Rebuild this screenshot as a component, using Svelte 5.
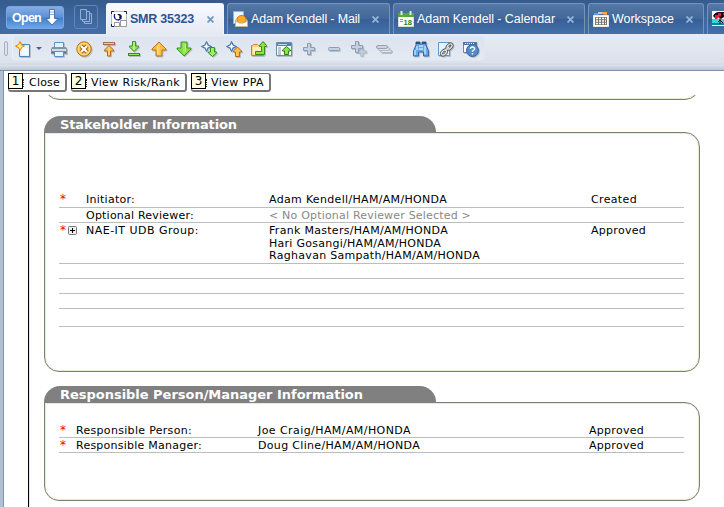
<script>
  const tabs = [
    { title: 'Adam Kendell - Mail', icon: 'mail', width: 163, text: 109 },
    { title: 'Adam Kendell - Calendar', icon: 'calendar', width: 192, text: 138 },
    { title: 'Workspace', icon: 'workspace', width: 116, text: 62 },
    { title: '', icon: 'picture', width: 30, text: 0 }
  ];
  const tools = ['print', 'stop', 'top', 'bottom', 'up', 'down', 'nextUnread', 'prevUnread', 'folder', 'restore', 'plus', 'minus', 'plusAll', 'minusAll', 'find', 'link', 'help'];
  const actions = [
    { key: 1, title: 'Close', width: 59, text: 31, tint: '#a02020' },
    { key: 2, title: 'View Risk/Rank', width: 116, text: 89, tint: '#222' },
    { key: 3, title: 'View PPA', width: 80, text: 53, tint: '#222' }
  ];
  const panels = [
    {
      title: 'Stakeholder Information', text: 177, kind: 'stake',
      rows: [
        { h: 16, req: true, label: 'Initiator:', lw: 49, values: [['Adam Kendell/HAM/AM/HONDA', 178]], status: 'Created', sw: 46 },
        { h: 15, label: 'Optional Reviewer:', lw: 108, values: [['< No Optional Reviewer Selected >', 202]], muted: true },
        { h: 41, req: true, expand: true, label: 'NAE-IT UDB Group:', lw: 113, values: [['Frank Masters/HAM/AM/HONDA', 179], ['Hari Gosangi/HAM/AM/HONDA', 172], ['Raghavan Sampath/HAM/AM/HONDA', 211]], status: 'Approved', sw: 55 },
        { h: 15 }, { h: 15 }, { h: 15 }, { h: 18 }
      ]
    },
    {
      title: 'Responsible Person/Manager Information', text: 303, kind: 'resp',
      rows: [
        { h: 15, req: true, label: 'Responsible Person:', lw: 116, values: [['Joe Craig/HAM/AM/HONDA', 153]], status: 'Approved', sw: 55 },
        { h: 15, req: true, label: 'Responsible Manager:', lw: 126, values: [['Doug Cline/HAM/AM/HONDA', 162]], status: 'Approved', sw: 55 }
      ]
    }
  ];

  // Spreads the letters of a label so that it takes the given width.
  function fit(node, width) {
    if (!width) return;
    const gap = (width - node.getBoundingClientRect().width) / node.textContent.length;
    node.style.letterSpacing = gap + 'px';
  }
</script>

{#snippet upArrow(fill, stroke)}
  <path d="M8 1 15 8v1h-4v6H5V9H1V8Z" {fill} {stroke} stroke-linejoin="round" />
  <path d="M8 3v11M6.5 5v8" stroke="#fff" stroke-opacity=".45" fill="none" />
{/snippet}

{#snippet unread()}
  <path d="M5.500 .5 7 4l3.500 1.500L7 7 5.500 10.500 4 7 .5 5.500 4 4Z" fill="#b4d6fa" stroke="#3468a8" />
  <path d="M5.500 3v5M3 5.500h5" stroke="#fff" />
{/snippet}

{#snippet plusShape()}
  <path d="M6.500 2.500h3v4h4v3h-4v4h-3v-4h-4v-3h4Z" fill="#c3d1e2" stroke="#8b9db5" />
{/snippet}

{#snippet icon(name)}
  <svg class="icon" viewBox="0 0 16 16" width="16" height="16">
    {#if name === 'new'}
      <path d="M5.500 3.500h9v12h-10V9" fill="#e3f1ff" stroke="#4a83bd" />
      <path d="M7 6h6v8H7z" fill="#fff" opacity=".6" />
      <path d="M5 .5 6.500 4 9.500 5 6.500 6.500 5 9.500 3.500 6.500.5 5l3-1.500Z" fill="#ffe58a" stroke="#e58a13" />
    {:else if name === 'print'}
      <path d="M3.500 6V1.500h9V6" fill="#e5f3ff" stroke="#5a90c8" />
      <path d="M1 6h14l1 2v5H0V8Z" fill="#8294a6" />
      <path d="M1 8h14v2H1z" fill="#cfdae4" />
      <path d="M1 11h14v1H1z" fill="#53687e" />
      <path d="M3.500 10.500h9v5h-9z" fill="#e5f3ff" stroke="#5a90c8" />
    {:else if name === 'stop'}
      <circle cx="8" cy="8" r="7.200" fill="#ffc34d" stroke="#b86f14" />
      <circle cx="8" cy="8" r="5.700" fill="none" stroke="#ffe08a" />
      <path d="m5 5 6 6m0-6-6 6" stroke="#9a5a16" stroke-width="4" />
      <path d="m5 5 6 6m0-6-6 6" stroke="#fff" stroke-width="2.200" />
    {:else if name === 'top'}
      <path d="M2 1h12v3H2z" fill="#a76b52" /><path d="M3 2h10v1H3z" fill="#ffce85" />
      <path d="m8 4.500 4.500 4.500v1H9.500v5h-3v-5h-3V9Z" fill="#ffbd45" stroke="#b66a25" />
      <path d="M8 6v8" stroke="#ffe39a" />
    {:else if name === 'bottom'}
      <path d="M6.500.5h3V5h3v1L8 10.500 3.500 6V5h3Z" fill="#93e34a" stroke="#3b962a" />
      <path d="M8 1v8" stroke="#d8ffa8" />
      <path d="M2 12h12v3H2z" fill="#328c28" /><path d="M3 13h10v1H3z" fill="#9ae85c" />
    {:else if name === 'up'}
      {@render upArrow('#ffbd3e', '#b8712a')}
    {:else if name === 'down'}
      <g transform="rotate(180 8 8)">{@render upArrow('#83df3c', '#3a9828')}</g>
    {:else if name === 'nextUnread'}
      {@render unread()}
      <path d="M9.500 6.500V11h-2v1l4 3.500 4-3.500v-1h-2V6.500Z" fill="#a4ec62" stroke="#318d25" />
    {:else if name === 'prevUnread'}
      {@render unread()}
      <path d="M9.500 15.500V11h-2v-1l4-4 4 4v1h-2v4.500Z" fill="#ffbf52" stroke="#bd641b" />
    {:else if name === 'folder'}
      <path d="M.5 4.500h1l1-1h4l1 1h5v10H.5Z" fill="#ffd784" stroke="#c8822f" />
      <path d="M2 6h9v7H2z" fill="#ffefb7" />
      <path d="M4.500 13.500v-3h6v-5h-2v-1l3.500-4 3.500 4v1h-2v8Z" fill="#93df36" stroke="#348c1e" />
    {:else if name === 'restore'}
      <path d="M.5 1.500h15v13H.5Z" fill="#fff" stroke="#7189a2" />
      <path d="M1 2h14v3H1z" fill="#4b85c5" /><path d="M2 3.500h9" stroke="#b8dcff" />
      <path d="M2 7h3M2 9h3M2 11h3M2 13h3" stroke="#81909e" />
      <path d="M8.500 13.500V10h-2V9l4-3.500 4 3.500v1h-2v3.500Z" fill="#8ce143" stroke="#26801f" />
    {:else if name === 'plus'}
      {@render plusShape()}
    {:else if name === 'minus'}
      <rect x="2.500" y="6.500" width="11" height="3" rx="1" fill="#c3d1e2" stroke="#8b9db5" />
    {:else if name === 'plusAll'}
      <g transform="translate(4.500 4.500) scale(.8)" opacity=".6">{@render plusShape()}</g>
      <g transform="translate(-2 -2)">{@render plusShape()}</g>
    {:else if name === 'minusAll'}
      <rect x="4.500" y="8.500" width="11" height="3" rx="1.500" fill="#e1e5ea" stroke="#b2b9c2" />
      <rect x="2.500" y="6.500" width="11" height="3" rx="1.500" fill="#e1e5ea" stroke="#b2b9c2" />
      <rect x=".5" y="4.500" width="11" height="3" rx="1.500" fill="#cbd5e1" stroke="#94a3b8" />
    {:else if name === 'find'}
      <path d="M3 1h4v3h2V1h4v3l2.500 6v5h-5v-4h-5v4h-5v-5L3 4Z" fill="#65a8ed" stroke="#35699f" />
      <path d="M3 1h4v2H3zm6 0h4v2H9z" fill="#28527f" />
      <path d="M2 9v5M4 5v4M12 5v8M6 5h4M6 8h4" stroke="#c7e7ff" stroke-width="1.300" />
    {:else if name === 'link'}
      <path d="M.5 1.500h11v13H.5Z" fill="#e4f3ff" stroke="#6594c8" />
      <g fill="none" stroke="#54595f" stroke-width="3"><ellipse cx="11.500" cy="5.500" rx="3" ry="1.800" transform="rotate(-45 11.500 5.500)" /><ellipse cx="6" cy="11.500" rx="3" ry="1.800" transform="rotate(-45 6 11.500)" /></g>
      <g fill="none" stroke="#e4e4df" stroke-width="1.300"><ellipse cx="11.500" cy="5.500" rx="3" ry="1.800" transform="rotate(-45 11.500 5.500)" /><ellipse cx="6" cy="11.500" rx="3" ry="1.800" transform="rotate(-45 6 11.500)" /><path d="m7 10 4-4" /></g>
    {:else if name === 'help'}
      <path d="M.5 1.500h13v10H.5Z" fill="#f7fbff" stroke="#71869c" />
      <path d="M0 1h14v3H0z" fill="#4779ad" /><path d="M2 2.500h9" stroke="#fff" stroke-dasharray="1 1" />
      <circle cx="9.500" cy="9.500" r="6" fill="#518bcd" stroke="#3a6197" />
      <path d="M7.500 8V7q2-2 4 0v1.500L9.500 10v1m0 1v1.500" fill="none" stroke="#fff" stroke-width="1.400" />
    {:else if name === 'notes'}
      <path d="M.5.5h15v15H.5Z" fill="#fff" stroke="#bbb" />
      <path d="M.5 3V.5H3M13 .5h2.500V3M.5 13v2.500H3" fill="none" stroke="#181878" />
      <path d="M3.500 3q-1 6 4 6l3-2" fill="none" stroke="#14146b" stroke-width="1.300" />
      <path d="M6 3h3l2 2-1 3-2-1 .500-2Z" fill="#12126c" />
      <path d="M9.500 9.500h6v6h-6Zm-6 2h5v4h-5Z" fill="#fff" stroke="#999" />
    {:else if name === 'mail'}
      <path d="M1.500.5h10v12h-10Z" fill="#f0f8ff" stroke="#8cb5e0" />
      <path d="m3.500 9 5.500-5 6 5v6.500H3.500Z" fill="#ffe5a7" stroke="#d2b57d" />
      <ellipse cx="9.500" cy="8.500" rx="4.500" ry="4" fill="#ffad28" stroke="#db7710" />
      <path d="m3.500 10 4 2h4l4-2v5.500h-12Z" fill="#fffdf2" stroke="#c0b49c" />
    {:else if name === 'calendar'}
      <path d="M.5 2.500h15v13H.5Z" fill="#fff" stroke="#d6ddd2" />
      <path d="M0 2h16v4H0z" fill="#56a83b" />
      <path d="M3.500 0v4m9-4v4" stroke="#dcefd5" stroke-width="2" />
      <path d="M2 8.500h3m-3 2h3" stroke="#8b959d" />
      <text x="5.500" y="13.500" font-size="7.500" font-weight="bold" fill="#277d23">18</text>
    {:else if name === 'workspace'}
      <path d="M1 4V2h4l1 2z" fill="#5f9de4" /><path d="M5 3V1h4l1 2z" fill="#9ed2ff" /><path d="M9 3V1h5v3z" fill="#f7a947" />
      <path d="M.5 4.500h15v11H.5Z" fill="#fff" stroke="#e8e8e4" />
      <path d="M2 6h12v8H2z" fill="#77756f" />
      <path d="M3 7.500h2m1 0h2m1 0h2m1 0h1M3 10h2m1 0h2m1 0h2m1 0h1M3 12.500h2m1 0h2m1 0h2m1 0h1" stroke="#fff" stroke-width="1.500" />
    {:else}
      <path d="M0 0h16v15H0z" fill="#fff" /><path d="M0 8h16v4H0z" fill="#35d5de" /><path d="M0 12h16v2H0z" fill="#008a94" />
      <path d="M1 5q2-4 6-4h7l2 3v4l-4-2-3 2-2-2-4 1Z" fill="#080808" />
      <path d="M3 4h3V2h3v4H7l-2 2H3Zm8-2h3v2h-3Z" fill="#ed1747" />
      <path d="M8 5v8m-2-2 2-2 3 3" stroke="#111" fill="none" />
    {/if}
  </svg>
{/snippet}

<div class="window">
  <header class="tabs">
    <button class="open"><span use:fit={29}>Open</span>
      <svg width="14" height="17" viewBox="0 0 14 17"><path d="M4.500.5h5v9h3.500L7 16 1 9.500h3.500Z" fill="#fff" stroke="#4773ad" /><path d="M5 3h4M5 5.500h4" stroke="#8caedb" /></svg>
    </button>
    <button class="thumbs" aria-label="Thumbnails"><svg width="14" height="16" viewBox="0 0 14 16"><g fill="#42689d" stroke="#91b0d9"><path d="M5.500 4.500h7v10h-7Z" /><path d="M3.500 2.500h7v10h-7Z" /><path d="M1.500.5h6v10h-6Z" /></g></svg></button>
    <div class="tab active">{@render icon('notes')}<span use:fit={64}>SMR 35323</span><svg class="x" viewBox="0 0 7 7"><path d="m.500.500 6 6m0-6-6 6" /></svg></div>
    {#each tabs as t}
      <div class="tab" style:width="{t.width}px">
        {@render icon(t.icon)}
        {#if t.title}<span use:fit={t.text}>{t.title}</span><svg class="x" viewBox="0 0 7 7"><path d="m.500.500 6 6m0-6-6 6" /></svg>{/if}
      </div>
    {/each}
  </header>

  <nav class="toolbar">
    <i class="grip"></i>
    <div class="tools">
      {@render icon('new')}
      <i class="caret"></i>
      {#each tools as tool}
        <span class="tool" class:split={tool === 'find'}>{@render icon(tool)}</span>
      {/each}
    </div>
  </nav>

  <main>
    <div class="actions">
      {#each actions as a}
        <button class="action" style:width="{a.width}px"><b>{a.key}</b><i style:border-color={a.tint}></i><span use:fit={a.text}>{a.title}</span></button>
      {/each}
    </div>
    <div class="page">
      <div class="previous"><div class="box"></div></div>
      {#each panels as p}
        <section class={p.kind}>
          <h2><span use:fit={p.text}>{p.title}</span></h2>
          <div class="box">
            {#each p.rows as r}
              <div class="row" style:height="{r.h}px">
                <span class="mark">{#if r.req}<em>*</em>{/if}{#if r.expand}<svg width="9" height="9" viewBox="0 0 9 9"><rect x=".5" y=".5" width="8" height="8" rx="1" fill="#eee" stroke="#777" /><path d="M2 4.500h5M4.500 2v5" stroke="#000" /></svg>{/if}</span>
                <span class="label"><span use:fit={r.lw}>{r.label ?? ''}</span></span>
                <span class="values" class:muted={r.muted}>
                  {#each r.values ?? [] as v}<span><span use:fit={v[1]}>{v[0]}</span></span>{/each}
                </span>
                <span><span use:fit={r.sw}>{r.status ?? ''}</span></span>
              </div>
            {/each}
          </div>
        </section>
      {/each}
    </div>
  </main>
</div>

<style>
  .window { width: 724px; height: 507px; overflow: hidden; display: flex; flex-direction: column; background: #b0bfd3; font: 11px/12px "DejaVu Sans", sans-serif; color: #000; box-sizing: border-box; }
  .window :global(*) { box-sizing: border-box; }
  button { margin: 0; padding: 0; font: inherit; color: inherit; }
  svg { display: block; flex: none; }
  span { white-space: nowrap; }
  .tabs { height: 34px; flex: none; display: flex; align-items: flex-end; background: linear-gradient(#365b8d, #3d679e 50%, #416da7); font: 12.5px/16px "Liberation Sans", Arial, sans-serif; }
  .open { width: 58px; height: 23px; flex: none; margin: 0 10px 5px 6px; padding: 0 4px 0 5px; display: flex; align-items: center; justify-content: space-between; border: 1px solid #7aa5df; border-radius: 3px; background: linear-gradient(#84ace3, #5e91d7 48%, #437ecb 52%, #6ca5e9); color: #fff; font-weight: bold; }
  .thumbs { width: 24px; height: 24px; flex: none; margin: 0 8px 5px 0; display: grid; place-items: center; border: 1px solid #6484b3; border-radius: 3px; background: transparent; }
  .tab { height: 31px; flex: none; margin-right: 3px; padding: 0 10px 0 4px; display: flex; align-items: center; border: 1px solid #7893b9; border-bottom: 0; border-radius: 3px 3px 0 0; background: linear-gradient(#5478a8, #426999 48%, #385f96 52%, #4471aa); color: #fff; }
  .tab span { margin-left: 3px; }
  .tab.active { width: 118px; margin-right: 3px; padding-right: 9px; border-color: #f3f6fb; background: linear-gradient(#f8faff, #e5e9f2); color: #2c5590; font-weight: bold; }
  .x { width: 7px; height: 7px; margin-left: auto; fill: none; stroke: #91b4d9; stroke-width: 1.8; }
  .active .x { stroke: #7099c1; }
  .toolbar { height: 37px; flex: none; display: flex; align-items: flex-start; padding: 2px 0 0 4px; background: linear-gradient(#e7ebf3, #dbe1eb 29px, #cfd7e2 30px, #dce2eb 31px, #bac7d6 36px, #7f91aa 36px); }
  .grip { width: 4px; height: 15px; margin: 5px 4px 0 0; border: 1px solid #a2b1c6; border-radius: 2px; background: #dce3ed; }
  .tools { width: 473px; height: 25px; display: flex; align-items: center; padding: 0 0 0 2px; border: 1px solid #dfe7f2; border-left-color: #edf1f7; border-radius: 4px; background: linear-gradient(#dde4ef, #e5eaf2); }
  .tools .icon { filter: drop-shadow(1px 1px 0 #b6bdc7); }
  .caret { margin: 0 9px 0 5px; border: 3px solid transparent; border-top-color: #3b659f; border-bottom: 0; }
  .tool { margin-right: 9px; }
  .tool.split { margin-left: 12px; }
  main { flex: 1; min-height: 0; margin-left: 3px; border-left: 1px solid #8094ae; background: #fff; display: flex; flex-direction: column; }
  .actions { height: 24px; flex: none; padding: 2px 0 0 4px; display: flex; gap: 4px; }
  .action { height: 19px; flex: none; display: flex; align-items: flex-start; border: 1px solid #777; border-width: 1px 2px 2px 1px; border-radius: 3px; background: #fff; }
  .action b { width: 15px; height: 16px; flex: none; margin: -1px 0 0 -1px; border: 1px solid #000; background: #ffffe1; font-size: 12px; font-weight: normal; line-height: 14px; text-align: center; }
  .action i { width: 1px; height: 8px; margin-top: 5px; border-left: 1px dotted; }
  .action span { margin-left: 4px; line-height: 18px; }
  .action:first-child span { margin-left: 5px; }
  .page { flex: 1; min-height: 0; margin-left: 24px; padding-left: 14px; border-left: 1px solid #000; box-shadow: inset 1px 0 #e1efcf; }
  .box { width: 656px; margin-left: 1px; border: 1px solid #7b7f75; border-radius: 15px; box-shadow: inset 0 0 0 1px #e1f1ce; }
  .previous { height: 21px; overflow: hidden; }
  .previous .box { height: 40px; margin-top: -35px; }
  h2 { width: 392px; height: 16px; margin: 0 0 0 1px; padding-left: 16px; border-radius: 16px 16px 0 0; background: #808080; color: #fff; font: bold 13px/17px "DejaVu Sans", sans-serif; }
  section .box { border-top-left-radius: 0; position: relative; }
  section .box::before { content: ""; position: absolute; left: -1px; top: -1px; width: 392px; height: 1px; background: #808080; }
  .stake .box { height: 240px; padding: 59px 0 0 15px; margin-bottom: 14px; }
  .resp .box { height: 99px; padding: 20px 0 0 15px; }
  .row { width: 625px; margin-left: -1px; padding: 1px 0 0 1px; display: grid; grid-template-columns: 26px 183px 322px auto; border-bottom: 1px solid #bdbdbd; line-height: 13px; align-items: start; }
  .resp .row { grid-template-columns: 16px 182px 331px auto; }
  .mark { display: flex; align-items: center; height: 13px; }
  .mark em { width: 8px; font-style: normal; font-size: 12px; color: #f00000; }
  .label, .values > span { display: block; }
  .values > span { height: 12.500px; }
  .muted { color: #888; }
</style>
